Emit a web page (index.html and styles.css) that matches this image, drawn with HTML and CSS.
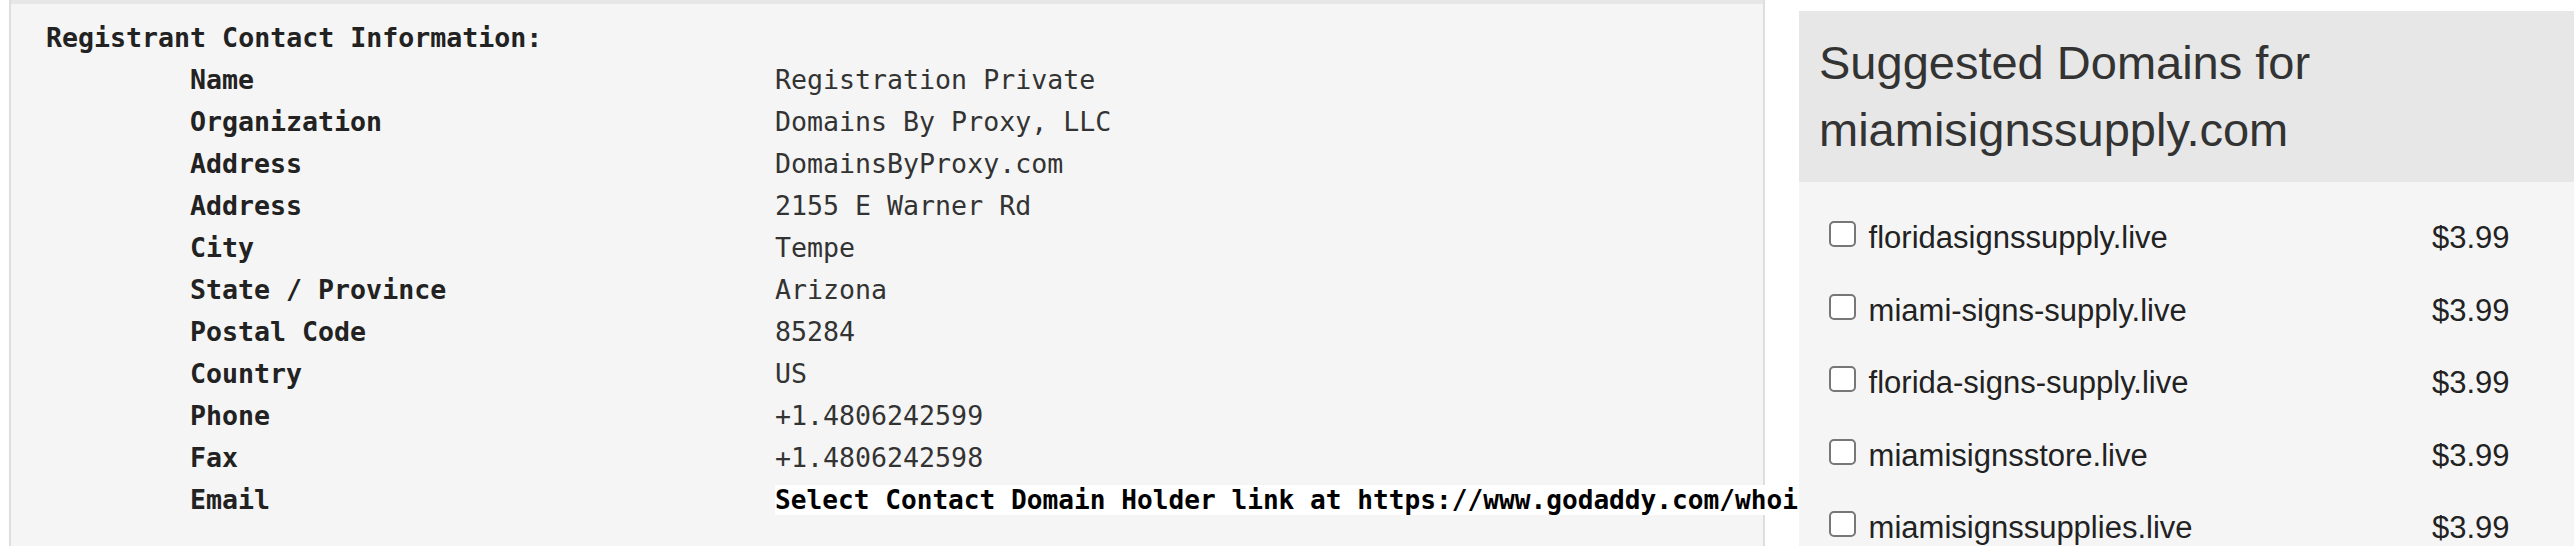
FILE: index.html
```html
<!DOCTYPE html>
<html lang="en">
<head>
  <meta charset="UTF-8" />
  <meta name="viewport" content="width=device-width, initial-scale=1.0">
  <title>miamisignssupply.com - Whois</title>
  <link rel="stylesheet" href="styles.css">
</head>
<body>
  <div class="page">
    <section class="whois">
      <div class="whois-top"></div>
      <div class="whois-body">
        <div class="whois-title">Registrant Contact Information:</div>
        <div class="whois-rows">
          <div class="label">Name</div><div class="value">Registration Private</div>
          <div class="label">Organization</div><div class="value">Domains By Proxy, LLC</div>
          <div class="label">Address</div><div class="value">DomainsByProxy.com</div>
          <div class="label">Address</div><div class="value">2155 E Warner Rd</div>
          <div class="label">City</div><div class="value">Tempe</div>
          <div class="label">State / Province</div><div class="value">Arizona</div>
          <div class="label">Postal Code</div><div class="value">85284</div>
          <div class="label">Country</div><div class="value">US</div>
          <div class="label">Phone</div><div class="value">+1.4806242599</div>
          <div class="label">Fax</div><div class="value">+1.4806242598</div>
          <div class="label">Email</div><div class="value value-email"><span class="email">Select Contact Domain Holder link at https://www.godaddy.com/whois/results.aspx?domain=miamisignssupply.com</span></div>
        </div>
      </div>
    </section>

    <aside class="suggest">
      <h2>Suggested Domains for miamisignssupply.com</h2>
      <ul class="suggest-list">
        <li><label><input type="checkbox"> floridasignssupply.live</label><span class="price">$3.99</span></li>
        <li><label><input type="checkbox"> miami-signs-supply.live</label><span class="price">$3.99</span></li>
        <li><label><input type="checkbox"> florida-signs-supply.live</label><span class="price">$3.99</span></li>
        <li><label><input type="checkbox"> miamisignsstore.live</label><span class="price">$3.99</span></li>
        <li><label><input type="checkbox"> miamisignssupplies.live</label><span class="price">$3.99</span></li>
      </ul>
    </aside>
  </div>
</body>
</html>
```

FILE: styles.css
```css
body {
  margin: 0;
  background-color: #fff;
  color: #333;
}
.page {
  display: flex;
  align-items: flex-start;
  height: 546px;
  overflow: hidden;
}

/* Whois record */
.whois {
  margin-left: 9px;
  width: 1752px;
  height: 600px;
  flex-shrink: 0;
  border-left: 2px solid #dedede;
  border-right: 2px solid #dedede;
  background-color: #f5f5f5;
  font-family: "DejaVu Sans Mono", monospace;
  font-size: 26.6px;
  line-height: 42px;
  white-space: nowrap;
}
.whois-top {
  height: 4px;
  background-color: #e6e7e6;
}
.whois-body {
  padding: 13px 0 0 35px;
}
.whois-title {
  font-weight: bold;
  color: #222;
}
.whois-rows {
  display: grid;
  grid-template-columns: 585px 1fr;
  padding-left: 144px;
}
.label {
  font-weight: bold;
  color: #222;
}
.value {
  color: #333;
}
.value-email {
  overflow: hidden;
  margin-right: -36px;
}
.email {
  background-color: #fff;
  color: #000;
  font-weight: bold;
  font-size: 26.15px;
}

/* Suggested domains */
.suggest {
  position: relative;
  z-index: 1;
  flex: 1;
  margin: 11px 0 0 34px;
  height: 600px;
  background-color: #f5f5f5;
  font-family: "Liberation Sans", Arial, sans-serif;
  color: #333;
}
.suggest h2 {
  margin: 0;
  padding: 18px 20px 19px;
  background-color: #e6e7e6;
  font-size: 47px;
  font-weight: normal;
  line-height: 67px;
}
.suggest-list {
  list-style: none;
  margin: 0;
  padding: 20px 0 0 30px;
}
.suggest-list li {
  display: grid;
  grid-template-columns: 1fr 142px;
  font-size: 31px;
  line-height: 72.6px;
}
.suggest-list label {
  color: #222;
}
.suggest-list input {
  appearance: none;
  -webkit-appearance: none;
  display: inline-block;
  width: 27px;
  height: 26px;
  margin: 0 4px 1px 0;
  border: 2px solid #777;
  border-radius: 5px;
  background-color: #fff;
  vertical-align: baseline;
}
.price {
  color: #222;
}
```
